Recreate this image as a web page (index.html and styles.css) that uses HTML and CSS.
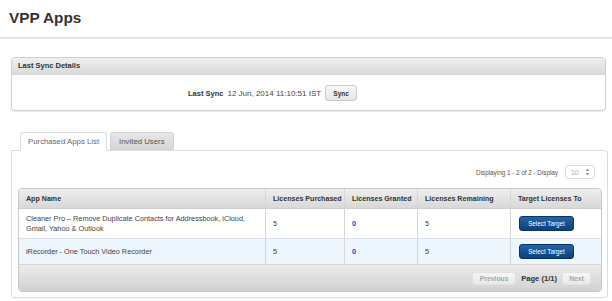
FILE: index.html
```html
<!DOCTYPE html>
<html>
<head>
    <meta charset="UTF-8" />
    <title>VPP Apps</title>
    <link rel="stylesheet" href="styles.css">
</head>
<body>
    <div class="page-header">
        <h1 class="page-title">VPP Apps</h1>
    </div>

    <!-- last sync panel -->
    <section class="panel sync-panel">
        <div class="panel-heading">Last Sync Details</div>
        <div class="sync-body">
            <span class="sync-label">Last Sync</span>
            <span class="sync-value">12 Jun, 2014 11:10:51 IST</span>
            <button class="btn btn-light">Sync</button>
        </div>
    </section>

    <!-- tabs -->
    <section class="tabs">
        <ul class="tab-list">
            <li class="tab active">Purchased Apps List</li>
            <li class="tab">Invited Users</li>
        </ul>
        <div class="tab-panel">
            <div class="list-toolbar">
                <span class="list-count">Displaying 1 - 2 of 2 - Display</span>
                <div class="page-size">
                    <span>10</span>
                    <svg width="5" height="8" viewBox="0 0 5 8">
                        <path d="M2.5 0.5 L4.5 3 L0.5 3 Z M0.5 5 L4.5 5 L2.5 7.5 Z" fill="#9a9a9a"/>
                    </svg>
                </div>
            </div>

            <div class="grid">
                <table class="grid-table">
                    <colgroup>
                        <col style="width:246px">
                        <col style="width:79px">
                        <col style="width:73px">
                        <col style="width:93px">
                        <col style="width:93px">
                    </colgroup>
                    <thead>
                        <tr>
                            <th>App Name</th>
                            <th>Licenses Purchased</th>
                            <th>Licenses Granted</th>
                            <th>Licenses Remaining</th>
                            <th>Target Licenses To</th>
                        </tr>
                    </thead>
                    <tbody>
                        <tr>
                            <td>Cleaner Pro – Remove Duplicate Contacts for Addressbook, iCloud, Gmail, Yahoo &amp; Outlook</td>
                            <td>5</td>
                            <td class="granted">0</td>
                            <td>5</td>
                            <td><button class="btn btn-primary">Select Target</button></td>
                        </tr>
                        <tr class="alt">
                            <td>iRecorder - One Touch Video Recorder</td>
                            <td>5</td>
                            <td class="granted">0</td>
                            <td>5</td>
                            <td><button class="btn btn-primary">Select Target</button></td>
                        </tr>
                    </tbody>
                </table>
                <div class="grid-footer">
                    <button class="btn btn-page">Previous</button>
                    <span class="page-info">Page (1/1)</span>
                    <button class="btn btn-page">Next</button>
                </div>
            </div>
        </div>
    </section>
</body>
</html>
```

FILE: styles.css
```css
body {
 font-family: "Liberation Sans", Arial, sans-serif;
 font-size: 7.5px;
 color: #444444;
 background-color: #ffffff;
 margin: 0;
 }

 .page-header {
 padding: 9px 9px 10px;
 border-bottom: 2px solid #e2e2e2;
 }

 .page-title {
 margin: 0;
 font-size: 15.3px;
 line-height: 18px;
 color: #333333;
 }

 /* panels */
 .panel {
 border: 1px solid #cfcfcf;
 border-radius: 4px;
 box-shadow: 0 1px 1px rgba(0, 0, 0, 0.08);
 }

 .sync-panel {
 margin: 18px 6px 0 11px;
 }

 .panel-heading {
 height: 16px;
 line-height: 16px;
 padding: 0 6px;
 font-weight: bold;
 color: #333333;
 background: linear-gradient(#f0f0f0, #d9d9d9);
 border-bottom: 1px solid #d6d6d6;
 border-radius: 3px 3px 0 0;
 }

 .sync-body {
 display: flex;
 align-items: center;
 padding: 10px 0 9px 176px;
 }

 .sync-label {
 font-weight: bold;
 color: #333333;
 margin-right: 4px;
 }

 .sync-value {
 font-size: 8px;
 color: #444444;
 margin-right: 4px;
 }

 /* buttons */
 .btn {
 font-family: inherit;
 font-weight: bold;
 cursor: pointer;
 border-radius: 3px;
 padding: 0;
 }

 .btn-light {
 width: 32px;
 height: 16px;
 font-size: 6.5px;
 color: #333333;
 border: 1px solid #c9c9c9;
 background: linear-gradient(#fafafa, #e4e4e4);
 }

 .btn-primary {
 width: 55px;
 height: 15px;
 font-size: 6.3px;
 font-weight: normal;
 color: #ffffff;
 border: 1px solid #0b3364;
 background: linear-gradient(#2463a8, #0e3f7d);
 }

 .btn-page {
 height: 13px;
 font-size: 6.8px;
 color: #a8a8a8;
 border: 1px solid #e2e2e2;
 background: linear-gradient(#f6f6f6, #e9e9e9);
 }

 .btn-page:first-child {
 width: 44px;
 }

 .btn-page:last-child {
 width: 29px;
 }

 /* tabs */
 .tabs {
 margin: 21px 4px 0 11px;
 }

 .tab-list {
 display: flex;
 gap: 3px;
 list-style: none;
 margin: 0 0 -1px;
 padding: 0 0 0 9px;
 }

 .tab {
 height: 17px;
 line-height: 17px;
 padding: 0 8px;
 font-size: 7.8px;
 color: #555555;
 border: 1px solid #d4d4d4;
 border-bottom: none;
 border-radius: 3px 3px 0 0;
 background: linear-gradient(#e6e6e6, #d6d6d6);
 }

 .tab.active {
 height: 18px;
 padding: 0 7px;
 color: #666666;
 background: #ffffff;
 border-color: #dddddd;
 }

 .tab-panel {
 border: 1px solid #dddddd;
 border-radius: 0 3px 3px 3px;
 padding: 14px 5px 5px 6px;
 }

 .list-toolbar {
 display: flex;
 justify-content: flex-end;
 align-items: center;
 gap: 7px;
 padding-right: 7px;
 margin-bottom: 9px;
 }

 .list-count {
 font-size: 6.3px;
 color: #555555;
 }

 .page-size {
 width: 30px;
 height: 14px;
 box-sizing: border-box;
 display: flex;
 align-items: center;
 justify-content: space-between;
 padding: 0 4px 0 5px;
 font-size: 6.6px;
 color: #aaaaaa;
 border: 1px solid #dddddd;
 border-radius: 3px;
 }

 /* grid */
 .grid {
 border: 1px solid #c9c9c9;
 border-radius: 4px;
 overflow: hidden;
 }

 .grid-table {
 width: 100%;
 table-layout: fixed;
 border-collapse: separate;
 border-spacing: 0;
 }

 .grid-table th {
 height: 19px;
 padding: 0 7px;
 text-align: left;
 font-size: 7.1px;
 color: #333333;
 background: linear-gradient(#eeeeee, #d8d8d8);
 border-bottom: 1px solid #d0d0d0;
 white-space: nowrap;
 }

 .grid-table td {
 padding: 5px 7px;
 line-height: 9.5px;
 font-size: 7.3px;
 color: #444444;
 border-bottom: 1px solid #d7e2ec;
 }

 .grid-table th + th,
 .grid-table td + td {
 border-left: 1px solid #d6d6d6;
 }

 .grid-table td .btn {
 display: block;
 margin-left: 1px;
 }

 .grid-table .alt td {
 background-color: #eef6fd;
 border-bottom: none;
 }

 .grid-table .granted {
 font-weight: bold;
 color: #1f3cf5;
 }

 .grid-footer {
 height: 26px;
 display: flex;
 justify-content: flex-end;
 align-items: center;
 gap: 5px;
 padding-right: 10px;
 border-top: 1px solid #d4d4d4;
 background: linear-gradient(#ebebeb, #d2d2d2);
 }

 .page-info {
 font-size: 7.6px;
 font-weight: bold;
 color: #333333;
 }
```
